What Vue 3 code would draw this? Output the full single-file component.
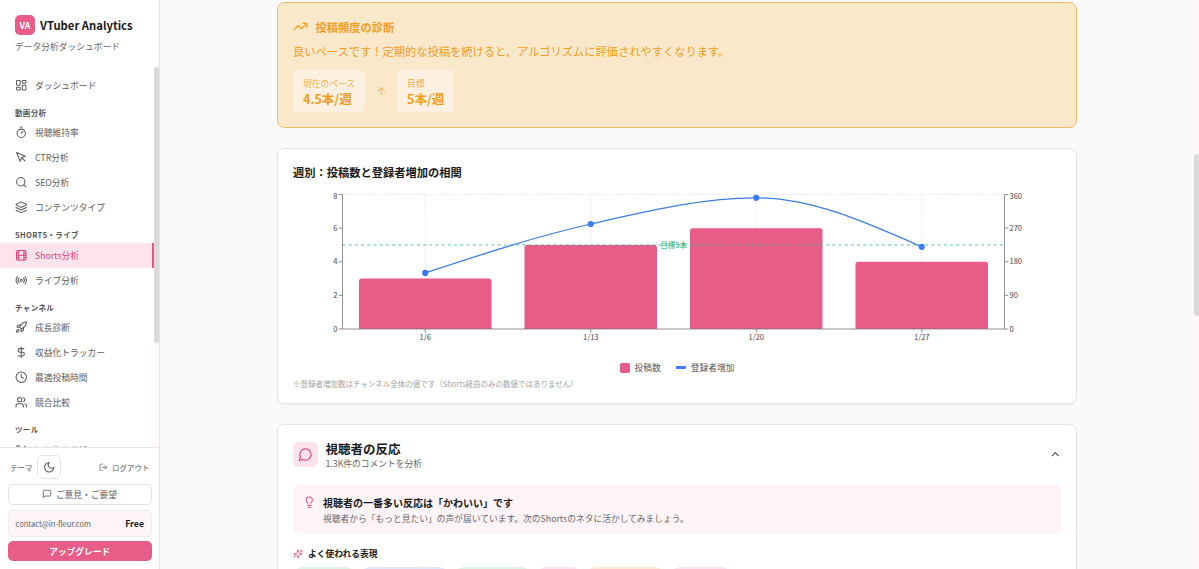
<script setup>
import { h } from 'vue'

// Stroke icons, 24x24 grid
const icons = {
  dashboard: '<rect x="3" y="3" width="7" height="9" rx="1"/><rect x="14" y="3" width="7" height="5" rx="1"/><rect x="14" y="12" width="7" height="9" rx="1"/><rect x="3" y="16" width="7" height="5" rx="1"/>',
  timer: '<path d="M10 2h4"/><path d="m12 14 3-3"/><circle cx="12" cy="14" r="8"/>',
  pointer: '<path d="m3 3 7.07 16.97 2.51-7.39 7.39-2.51L3 3z"/><path d="m13 13 6 6"/>',
  search: '<circle cx="11" cy="11" r="8"/><path d="m21 21-4.3-4.3"/>',
  layers: '<path d="m12.83 2.18a2 2 0 0 0-1.66 0L2.6 6.08a1 1 0 0 0 0 1.83l8.58 3.91a2 2 0 0 0 1.66 0l8.58-3.9a1 1 0 0 0 0-1.83Z"/><path d="m22 17.65-9.17 4.16a2 2 0 0 1-1.66 0L2 17.65"/><path d="m22 12.65-9.17 4.16a2 2 0 0 1-1.66 0L2 12.65"/>',
  film: '<rect width="18" height="18" x="3" y="3" rx="2"/><path d="M7 3v18M3 7.5h4M3 12h18M3 16.5h4M17 3v18M17 7.5h4M17 16.5h4"/>',
  radio: '<path d="M4.9 19.1C1 15.2 1 8.8 4.9 4.9"/><path d="M7.8 16.2c-2.3-2.3-2.3-6.1 0-8.5"/><circle cx="12" cy="12" r="2"/><path d="M16.2 7.8c2.3 2.3 2.3 6.1 0 8.5"/><path d="M19.1 4.9C23 8.8 23 15.1 19.1 19"/>',
  rocket: '<path d="M4.5 16.5c-1.5 1.26-2 5-2 5s3.74-.5 5-2c.71-.84.7-2.13-.09-2.91a2.18 2.18 0 0 0-2.91-.09z"/><path d="m12 15-3-3a22 22 0 0 1 2-3.95A12.88 12.88 0 0 1 22 2c0 2.72-.78 7.5-6 11a22.35 22.35 0 0 1-4 2z"/><path d="M9 12H4s.55-3.03 2-4c1.62-1.08 5 0 5 0"/><path d="M12 15v5s3.03-.55 4-2c1.08-1.62 0-5 0-5"/>',
  dollar: '<path d="M12 2v20"/><path d="M17 5H9.5a3.5 3.5 0 0 0 0 7h5a3.5 3.5 0 0 1 0 7H6"/>',
  clock: '<circle cx="12" cy="12" r="10"/><path d="M12 6v6l4 2"/>',
  users: '<path d="M16 21v-2a4 4 0 0 0-4-4H6a4 4 0 0 0-4 4v2"/><circle cx="9" cy="7" r="4"/><path d="M22 21v-2a4 4 0 0 0-3-3.87"/><path d="M16 3.13a4 4 0 0 1 0 7.75"/>',
  scissors: '<circle cx="6" cy="6" r="3"/><path d="M8.12 8.12 12 12"/><path d="M20 4 8.12 15.88"/><circle cx="6" cy="18" r="3"/><path d="M14.8 14.8 20 20"/>',
  moon: '<path d="M12 3a6 6 0 0 0 9 9 9 9 0 1 1-9-9Z"/>',
  logout: '<path d="M9 21H5a2 2 0 0 1-2-2V5a2 2 0 0 1 2-2h4"/><path d="m16 17 5-5-5-5"/><path d="M21 12H9"/>',
  message: '<path d="M21 15a2 2 0 0 1-2 2H7l-4 4V5a2 2 0 0 1 2-2h14a2 2 0 0 1 2 2z"/>',
  trending: '<path d="m22 7-8.5 8.5-5-5L2 17"/><path d="M16 7h6v6"/>',
  arrowUp: '<path d="m5 12 7-7 7 7"/><path d="M12 19V5"/>',
  comment: '<path d="M7.9 20A9 9 0 1 0 4 16.1L2 22Z"/>',
  bulb: '<path d="M15 14c.2-1 .7-1.7 1.5-2.5 1-.9 1.5-2.2 1.5-3.5A6 6 0 0 0 6 8c0 1 .2 2.2 1.5 3.5.7.7 1.3 1.5 1.5 2.5"/><path d="M9 18h6"/><path d="M10 22h4"/>',
  chevronUp: '<path d="m18 15-6-6-6 6"/>',
  sparkles: '<path d="M9.937 15.5A2 2 0 0 0 8.5 14.063l-6.135-1.582a.5.5 0 0 1 0-.962L8.5 9.936A2 2 0 0 0 9.937 8.5l1.582-6.135a.5.5 0 0 1 .963 0L14.063 8.5A2 2 0 0 0 15.5 9.937l6.135 1.581a.5.5 0 0 1 0 .964L15.5 14.063a2 2 0 0 0-1.437 1.437l-1.582 6.135a.5.5 0 0 1-.963 0z"/><path d="M20 3v4M22 5h-4M4 17v2M5 18H3"/>',
}

const Icon = (props) =>
  h('svg', {
    viewBox: '0 0 24 24',
    width: props.size,
    height: props.size,
    fill: 'none',
    stroke: 'currentColor',
    'stroke-width': 2,
    'stroke-linecap': 'round',
    'stroke-linejoin': 'round',
    'aria-hidden': 'true',
    innerHTML: icons[props.name],
  })
Icon.props = ['name', 'size']

const navGroups = [
  { items: [{ icon: 'dashboard', label: 'ダッシュボード' }] },
  {
    title: '動画分析',
    items: [
      { icon: 'timer', label: '視聴維持率' },
      { icon: 'pointer', label: 'CTR分析' },
      { icon: 'search', label: 'SEO分析' },
      { icon: 'layers', label: 'コンテンツタイプ' },
    ],
  },
  {
    title: 'SHORTS・ライブ',
    items: [
      { icon: 'film', label: 'Shorts分析', active: true },
      { icon: 'radio', label: 'ライブ分析' },
    ],
  },
  {
    title: 'チャンネル',
    items: [
      { icon: 'rocket', label: '成長診断' },
      { icon: 'dollar', label: '収益化トラッカー' },
      { icon: 'clock', label: '最適投稿時間' },
      { icon: 'users', label: '競合比較' },
    ],
  },
  { title: 'ツール', items: [{ icon: 'scissors', label: '切り抜き分析' }] },
]

// Chart geometry
const plot = { left: 49.5, right: 711.5, top: 8.5, bottom: 143 }
const band = (plot.right - plot.left) / 4
const barWidth = 132.5
const yPos = (value, max) => plot.bottom - (value / max) * (plot.bottom - plot.top)

const weeks = [
  { label: '1/6', posts: 3, subs: 150 },
  { label: '1/13', posts: 5, subs: 281 },
  { label: '1/20', posts: 6, subs: 351 },
  { label: '1/27', posts: 4, subs: 220 },
].map((w, i) => ({
  ...w,
  x: plot.left + band * (i + 0.5),
  barY: yPos(w.posts, 8),
  dotY: yPos(w.subs, 360),
}))

const leftTicks = [0, 2, 4, 6, 8]
const rightTicks = [0, 90, 180, 270, 360]
// keep the top label inside the plot
const tickY = (value, max) => Math.max(yPos(value, max), plot.top + 2)

const barPath = (w) => {
  const l = w.x - barWidth / 2
  const r = w.x + barWidth / 2
  return `M${l} ${plot.bottom}V${w.barY + 2.5}q0-2.5 2.5-2.5H${r - 2.5}q2.5 0 2.5 2.5V${plot.bottom}Z`
}

// Monotone cubic through the weekly points
const slopes = weeks.slice(1).map((w, i) => (w.dotY - weeks[i].dotY) / band)
const inner = [1, 2].map((i) => {
  const a = slopes[i - 1]
  const b = slopes[i]
  return (Math.sign(a) + Math.sign(b)) * Math.min(Math.abs(a), Math.abs(b), Math.abs(a + b) / 4)
})
const tangents = [(3 * slopes[0] - inner[0]) / 2, ...inner, (3 * slopes[2] - inner[1]) / 2]
const linePath = weeks.slice(1).reduce((d, w, i) => {
  const p = weeks[i]
  const s = band / 3
  return `${d}C${p.x + s} ${p.dotY + tangents[i] * s} ${w.x - s} ${w.dotY - tangents[i + 1] * s} ${w.x} ${w.dotY}`
}, `M${weeks[0].x} ${weeks[0].dotY}`)

const chips = [
  { tone: 'green', width: 61.5 },
  { tone: 'blue', width: 89.5 },
  { tone: 'green', width: 77 },
  { tone: 'pink', width: 45 },
  { tone: 'orange', width: 79 },
  { tone: 'pink', width: 61 },
]
</script>

<template>
  <div class="app">
    <aside class="sidebar">
      <header class="brand">
        <div class="brand-row">
          <span class="brand-logo">VA</span>
          <span class="brand-name">VTuber Analytics</span>
        </div>
        <p class="brand-sub">データ分析ダッシュボード</p>
      </header>

      <div class="nav-wrap">
        <nav class="nav">
          <template v-for="(group, gi) in navGroups" :key="gi">
            <h3 v-if="group.title" class="nav-title">{{ group.title }}</h3>
            <a
              v-for="item in group.items"
              :key="item.label"
              class="nav-item"
              :class="{ 'nav-item--active': item.active }"
            >
              <Icon :name="item.icon" size="12.5" />
              <span>{{ item.label }}</span>
            </a>
          </template>
        </nav>
        <div class="nav-track"><div class="nav-thumb" /></div>
      </div>

      <footer class="side-footer">
        <div class="theme-row">
          <span>テーマ</span>
          <button class="theme-btn"><Icon name="moon" size="12.5" /></button>
          <button class="logout"><Icon name="logout" size="8.75" />ログアウト</button>
        </div>
        <button class="feedback"><Icon name="message" size="10" />ご意見・ご要望</button>
        <div class="account">
          <span class="account-mail">contact@in-fleur.com</span>
          <span class="account-plan">Free</span>
        </div>
        <button class="upgrade">アップグレード</button>
      </footer>
    </aside>

    <main class="main">
      <!-- 投稿頻度 -->
      <section class="card pace">
        <h2 class="pace-title"><Icon name="trending" size="15" />投稿頻度の診断</h2>
        <p class="pace-text">良いペースです！定期的な投稿を続けると、アルゴリズムに評価されやすくなります。</p>
        <div class="pace-row">
          <div class="pace-box">
            <span class="pace-label">現在のペース</span>
            <strong class="pace-value">4.5本/週</strong>
          </div>
          <Icon class="pace-arrow" name="arrowUp" size="12.5" />
          <div class="pace-box">
            <span class="pace-label">目標</span>
            <strong class="pace-value">5本/週</strong>
          </div>
        </div>
      </section>

      <!-- 週別チャート -->
      <section class="card weekly">
        <h2 class="weekly-title">週別：投稿数と登録者増加の相関</h2>
        <svg class="chart" width="768" height="160" viewBox="0 0 768 160">
          <g class="grid">
            <line :x1="plot.left" :x2="plot.right" :y1="plot.top" :y2="plot.top" />
            <line v-for="w in weeks" :key="w.label" :x1="w.x" :x2="w.x" :y1="plot.top" :y2="plot.bottom" />
          </g>
          <path v-for="w in weeks" :key="w.label" class="bar" :d="barPath(w)" />
          <g class="axis">
            <line :x1="plot.left" :x2="plot.right" :y1="plot.bottom" :y2="plot.bottom" />
            <line :x1="plot.left" :x2="plot.left" :y1="plot.top" :y2="plot.bottom" />
            <line :x1="plot.right" :x2="plot.right" :y1="plot.top" :y2="plot.bottom" />
            <line v-for="t in leftTicks" :key="t" :x1="plot.left - 3.75" :x2="plot.left" :y1="yPos(t, 8)" :y2="yPos(t, 8)" />
            <line v-for="t in rightTicks" :key="t" :x1="plot.right" :x2="plot.right + 3.75" :y1="yPos(t, 360)" :y2="yPos(t, 360)" />
            <line v-for="w in weeks" :key="w.label" :x1="w.x" :x2="w.x" :y1="plot.bottom" :y2="plot.bottom + 3.75" />
          </g>
          <text class="goal-label" x="380.7" :y="yPos(5, 8) + 2.6">目標5本</text>
          <line class="goal" :x1="plot.left" :x2="plot.right" :y1="yPos(5, 8)" :y2="yPos(5, 8)" />
          <g class="tick">
            <text v-for="t in leftTicks" :key="t" class="tick--end" :x="plot.left - 5" :y="tickY(t, 8) + 2.7">{{ t }}</text>
            <text v-for="t in rightTicks" :key="t" :x="plot.right + 5" :y="tickY(t, 360) + 2.7">{{ t }}</text>
            <text v-for="w in weeks" :key="w.label" class="tick--mid" :x="w.x" :y="plot.bottom + 10.9">{{ w.label }}</text>
          </g>
          <path class="line" :d="linePath" />
          <circle v-for="w in weeks" :key="w.label" class="dot" :cx="w.x" :cy="w.dotY" r="3.1" />
        </svg>
        <div class="legend">
          <span class="legend-item"><i class="legend-square" />投稿数</span>
          <span class="legend-item"><i class="legend-line" />登録者増加</span>
        </div>
        <p class="note">※登録者増加数はチャンネル全体の値です（Shorts経由のみの数値ではありません）</p>
      </section>

      <!-- 視聴者の反応 -->
      <section class="card reaction">
        <header class="reaction-head">
          <span class="reaction-icon"><Icon name="comment" size="15" /></span>
          <div class="reaction-heading">
            <h2>視聴者の反応</h2>
            <p>1.3K件のコメントを分析</p>
          </div>
          <Icon class="reaction-toggle" name="chevronUp" size="12.5" />
        </header>
        <div class="insight">
          <Icon class="insight-icon" name="bulb" size="12.5" />
          <div>
            <h3>視聴者の一番多い反応は「かわいい」です</h3>
            <p>視聴者から「もっと見たい」の声が届いています。次のShortsのネタに活かしてみましょう。</p>
          </div>
        </div>
        <h3 class="phrases-title"><Icon name="sparkles" size="10" />よく使われる表現</h3>
        <div class="chips">
          <span
            v-for="(c, i) in chips"
            :key="i"
            class="chip"
            :class="`chip--${c.tone}`"
            :style="{ width: c.width + 'px' }"
          />
        </div>
      </section>
    </main>

    <div class="page-track"><div class="page-thumb" /></div>
  </div>
</template>

<style>
body {
  overflow: hidden;
}
</style>

<style scoped>
.app {
  display: flex;
  height: 569px;
  overflow: hidden;
  background: #fafafa;
  color: #1a1a1a;
  font-family: "Noto Sans CJK JP", sans-serif;
  font-size: 8.75px;
}

.app *,
.app *::before {
  box-sizing: border-box;
}

h2, h3, p {
  margin: 0;
}

svg {
  display: block;
  flex-shrink: 0;
}

button {
  display: flex;
  align-items: center;
  justify-content: center;
  padding: 0;
  border: 0;
  background: none;
  color: inherit;
  font: inherit;
}

/* ── Sidebar ─────────────────────────────────────────────────── */
.sidebar {
  display: flex;
  flex-direction: column;
  width: 160px;
  flex-shrink: 0;
  background: #fff;
  border-right: 1px solid #e5e5e5;
}

.brand {
  height: 67px;
  padding: 15px 15px 0;
  flex-shrink: 0;
}

.brand-row {
  display: flex;
  align-items: center;
  gap: 5px;
  height: 20px;
}

.brand-logo {
  display: grid;
  place-items: center;
  width: 20px; height: 20px;
  border-radius: 5px;
  background: #e85d88;
  color: #fff;
  font-size: 8.75px;
  font-weight: 700;
}

.brand-name {
  font-size: 11.25px;
  font-weight: 700;
  line-height: 20px;
  white-space: nowrap;
}

.brand-sub {
  margin-top: 5px;
  color: #666;
  line-height: 13px;
}

.nav-wrap {
  display: flex;
  flex: 1;
  min-height: 0;
}

.nav {
  flex: 1;
  padding-top: 5.5px;
  overflow: hidden;
}

.nav-title {
  height: 22.5px;
  padding: 7px 15px 0;
  color: #555;
  font-size: 7.5px;
  font-weight: 700;
  letter-spacing: 0.375px;
  line-height: 15px;
}

.nav-item {
  display: flex;
  align-items: center;
  gap: 7.5px;
  height: 25px;
  padding-left: 15px;
  color: #5c5c5c;
  white-space: nowrap;
}

.nav-item--active {
  background: #fde4ec;
  border-right: 2px solid #dd5a88;
  color: #d6457a;
}

.nav-track {
  width: 5px;
  background: #fff8fa;
}

.nav-thumb {
  height: 276px;
  border-radius: 3px;
  background: #dadada;
}

.side-footer {
  height: 122px;
  padding: 7px 7px 0 7.5px;
  border-top: 1px solid #e5e5e5;
  flex-shrink: 0;
}

.theme-row {
  display: flex;
  align-items: center;
  height: 24px;
  padding: 0 2.5px;
  color: #5c5c5c;
  font-size: 7.5px;
}

.theme-btn {
  width: 24px; height: 24px;
  margin-left: 4.5px;
  border: 1px solid #e5e5e5;
  border-radius: 5px;
}

.logout {
  gap: 4px;
  margin-left: auto;
}

.feedback {
  gap: 3.5px;
  width: 100%;
  height: 21px;
  margin-top: 4.5px;
  border: 1px solid #e5e5e5;
  border-radius: 5px;
  color: #5c5c5c;
}

.account {
  display: flex;
  align-items: center;
  justify-content: space-between;
  height: 27px;
  margin-top: 5px;
  padding: 0 7px;
  border: 1px solid #ececec;
  border-radius: 5px;
  background: #fff5f8;
}

.account-mail {
  color: #5c5c5c;
  font-size: 7.5px;
}

.account-plan {
  font-weight: 700;
}

.upgrade {
  width: 100%;
  height: 20px;
  margin-top: 4.5px;
  border-radius: 5px;
  background: #e85d88;
  color: #fff;
  font-weight: 700;
}

/* ── Main ────────────────────────────────────────────────────── */
.main {
  display: flex;
  flex-direction: column;
  align-items: center;
  flex: 1;
  gap: 20px;
  padding-top: 2px;
  overflow: hidden;
}

.card {
  width: 800px;
  flex-shrink: 0;
  border: 1px solid #e5e5e5;
  border-radius: 7.5px;
  background: #fff;
  box-shadow: 0 1px 2px rgba(0, 0, 0, 0.06);
}

/* Posting pace */
.pace {
  height: 126px;
  padding: 15px;
  border-color: #efbb62;
  background: #fae8cb;
  box-shadow: none;
  color: #f29d1b;
}

.pace-title {
  display: flex;
  align-items: center;
  gap: 7.5px;
  height: 17px;
  font-size: 11.25px;
  font-weight: 700;
}

.pace-text {
  margin-top: 6px;
  font-size: 11.25px;
  line-height: 20px;
}

.pace-row {
  display: flex;
  align-items: center;
  gap: 10px;
  margin-top: 9px;
}

.pace-box {
  display: flex;
  flex-direction: column;
  height: 42px;
  padding: 7px 9.5px 0 10px;
  border-radius: 5px;
  background: rgba(255, 255, 255, 0.4);
}

.pace-label {
  font-size: 8.75px;
  line-height: 13px;
  opacity: 0.8;
}

.pace-value {
  font-size: 12.5px;
  line-height: 18px;
}

.pace-arrow {
  opacity: 0.6;
}

/* Weekly chart */
.weekly {
  height: 256px;
  padding: 15px;
}

.weekly-title {
  font-size: 11.25px;
  font-weight: 700;
  line-height: 17px;
}

.chart {
  margin-top: 5px;
}

.grid line {
  stroke: #ddd;
  stroke-width: 0.7;
  stroke-dasharray: 1.9 1.9;
}

.axis line {
  stroke: #777;
  stroke-width: 0.8;
}

.bar {
  fill: #e85d88;
}

.goal {
  stroke: #2fb583;
  stroke-width: 0.8;
  stroke-dasharray: 3.1 3.1;
}

.goal-label {
  fill: #10b070;
  font-size: 7.5px;
  text-anchor: middle;
}

.tick {
  fill: #444;
  font-size: 7.5px;
}

.tick--end { text-anchor: end; }
.tick--mid { text-anchor: middle; }

.line {
  fill: none;
  stroke: #3b7de8;
  stroke-width: 1.25;
}

.dot {
  fill: #3b7df0;
}

.legend {
  display: flex;
  justify-content: center;
  gap: 15px;
  height: 13px;
  margin-top: 15px;
  color: #555;
  line-height: 13px;
}

.legend-item {
  display: flex;
  align-items: center;
  gap: 5px;
}

.legend-square {
  width: 10px; height: 10px;
  border-radius: 2px;
  background: #e85d88;
}

.legend-line {
  width: 10px; height: 2.5px;
  border-radius: 1px;
  background: #3b7df0;
}

.note {
  margin-top: 3.5px;
  color: #a3a3a3;
  font-size: 7.5px;
  line-height: 11px;
}

/* Audience reaction */
.reaction {
  height: 400px;
  padding: 15px;
}

.reaction-head {
  display: flex;
  align-items: center;
  gap: 7.5px;
  height: 29px;
}

.reaction-icon {
  display: grid;
  place-items: center;
  width: 25px; height: 25px;
  border-radius: 5px;
  background: #fde4ec;
  color: #e0527f;
}

.reaction-heading h2 {
  font-size: 12.5px;
  font-weight: 700;
  line-height: 17px;
}

.reaction-heading p {
  color: #666;
  line-height: 13px;
}

.reaction-toggle {
  margin-left: auto;
  color: #444;
}

.insight {
  display: flex;
  gap: 7.5px;
  height: 49px;
  margin-top: 16px;
  padding: 10px;
  border-radius: 5px;
  background: #fff5f8;
}

.insight-icon {
  margin-top: 1px;
  color: #e0527f;
}

.insight h3 {
  font-size: 10px;
  font-weight: 700;
  line-height: 15px;
}

.insight p {
  margin-top: 2px;
  color: #666;
  line-height: 14px;
}

.phrases-title {
  display: flex;
  align-items: center;
  gap: 5px;
  height: 14px;
  margin-top: 12.5px;
  font-size: 8.75px;
  font-weight: 700;
}

.phrases-title svg {
  color: #e0527f;
}

.chips {
  display: flex;
  gap: 5px;
  margin-top: 6px;
}

.chip {
  height: 20px;
  border-radius: 10px;
}

.chip--green { background: #dcf5e6; }
.chip--blue { background: #dfe9fb; }
.chip--pink { background: #fce4f0; }
.chip--orange { background: #ffe9d9; }

/* ── Page scrollbar ──────────────────────────────────────────── */
.page-track {
  width: 5px;
  padding-top: 154px;
  background: #fff8fa;
}

.page-thumb {
  height: 162px;
  border-radius: 3px;
  background: #dadada;
}
</style>
